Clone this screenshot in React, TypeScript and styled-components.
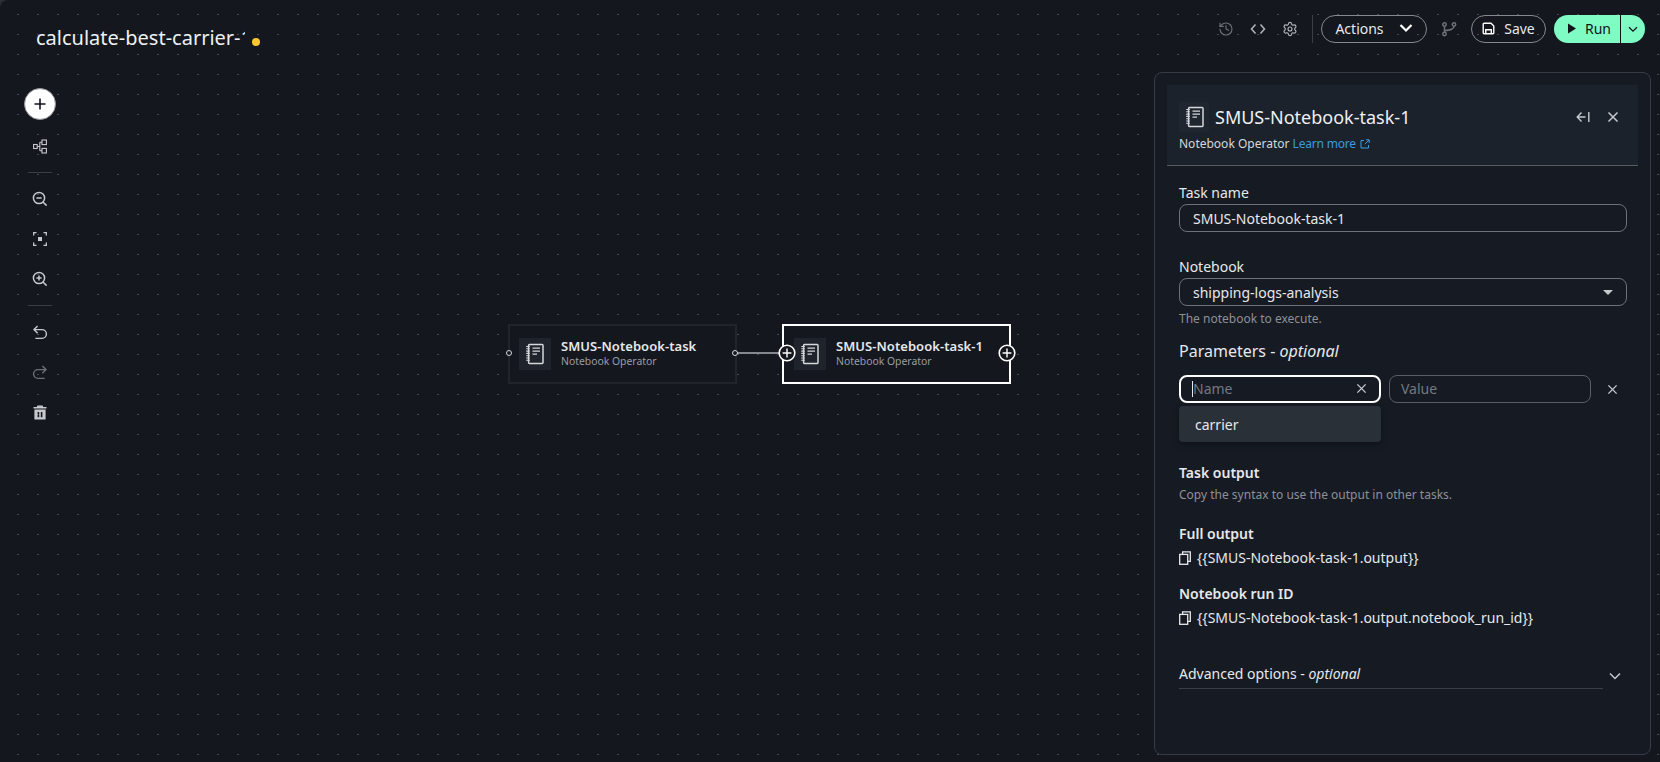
import styled, { createGlobalStyle } from "styled-components";
import { History, Settings } from "lucide-react";

const GlobalStyle = createGlobalStyle`
  html, body {
    margin: 0;
    padding: 0;
    background: #2b2e34;
  }
  * {
    box-sizing: border-box;
  }
`;

function NotebookIcon() {
  return (
    <svg width="20" height="22" viewBox="0 0 20 22" fill="none" stroke="currentColor">
      <rect x="3.6" y="1.6" width="14.4" height="18.8" rx="0.8" strokeWidth="1.5" />
      <path d="M7.5 5.2h7.5M7.5 8.2h7.5M7.5 11.2h4.5" strokeWidth="1.3" />
      <path d="M1.2 3.5h3.6M1.2 5.8h3.6M1.2 8.1h3.6M1.2 10.4h3.6M1.2 12.7h3.6M1.2 15h3.6M1.2 17.3h3.6" strokeWidth="1.1" />
    </svg>
  );
}

function CloseIcon({ size = 12 }: { size?: number }) {
  return (
    <svg width={size} height={size} viewBox="0 0 12 12" fill="none" stroke="currentColor" strokeWidth="1.5">
      <path d="M1.5 1.5l9 9M10.5 1.5l-9 9" />
    </svg>
  );
}

function CopyIcon() {
  return (
    <svg width="12" height="14" viewBox="0 0 12 14" fill="none" stroke="currentColor" strokeWidth="1.3">
      <rect x="0.7" y="3.4" width="8" height="9.9" />
      <path d="M3.6 3.2V0.8h7.7v9.6H8.8" />
    </svg>
  );
}

function AddCircle() {
  return (
    <svg width="18" height="18" viewBox="0 0 18 18" fill="#14171d" stroke="#fff">
      <circle cx="9" cy="9" r="7.8" strokeWidth="1.6" />
      <path d="M9 4.6v8.8M4.6 9h8.8" strokeWidth="1.4" />
    </svg>
  );
}

function TaskNode({ name, left, selected }: { name: string; left: number; selected?: boolean }) {
  return (
    <Node $left={left} $selected={selected}>
      <NodeIcon>
        <NotebookIcon />
      </NodeIcon>
      <NodeText>
        <NodeName>{name}</NodeName>
        <NodeType>Notebook Operator</NodeType>
      </NodeText>
      {selected ? (
        <>
          <AddHandle $side="left" $offset={-6}>
            <AddCircle />
          </AddHandle>
          <AddHandle $side="right" $offset={-7}>
            <AddCircle />
          </AddHandle>
        </>
      ) : (
        <>
          <RingHandle $side="left" $offset={-4} />
          <RingHandle $side="right" $offset={-3} />
        </>
      )}
    </Node>
  );
}

export default function App() {
  return (
    <Page>
      <GlobalStyle />
      <Header>
        <TitleWrap>
          <Title>calculate-best-carrier-1</Title>
          <UnsavedDot />
        </TitleWrap>
        <Actions>
          <HeaderIcon $dim>
            <History size={16} strokeWidth={1.7} />
          </HeaderIcon>
          <HeaderIcon>
            <svg width="16" height="16" viewBox="0 0 16 16" fill="none" stroke="currentColor" strokeWidth="1.5">
              <path d="M5.5 3.5L1.5 8l4 4.5M10.5 3.5l4 4.5-4 4.5" />
            </svg>
          </HeaderIcon>
          <HeaderIcon>
            <Settings size={16} strokeWidth={1.7} />
          </HeaderIcon>
          <HeaderDivider />
          <PillButton $width={106} $gap={15}>
            Actions
            <svg width="14" height="10" viewBox="0 0 14 10" fill="none" stroke="#fff" strokeWidth="2.2">
              <path d="M1.5 2l5.5 5.5L12.5 2" />
            </svg>
          </PillButton>
          <BranchIcon>
            <svg width="16" height="16" viewBox="0 0 16 16" fill="none" stroke="currentColor" strokeWidth="1.5">
              <circle cx="3.5" cy="3.5" r="1.7" />
              <circle cx="3.5" cy="13" r="1.7" />
              <circle cx="13" cy="3.5" r="1.7" />
              <path d="M3.5 5.2v6.1M13 5.2c0 3-3 3.6-9.5 4.6" />
            </svg>
          </BranchIcon>
          <PillButton $width={75} $gap={9}>
            <svg width="13" height="13" viewBox="0 0 14 14" fill="none" stroke="#fff" strokeWidth="1.5">
              <path d="M1.3 2.3a1 1 0 0 1 1-1h7.4l3 3v7.4a1 1 0 0 1-1 1H2.3a1 1 0 0 1-1-1z" />
              <path d="M4 12.5V8.3h6v4.2" />
            </svg>
            Save
          </PillButton>
          <RunGroup>
            <RunButton>
              <svg width="10" height="11" viewBox="0 0 10 11" fill="#0f141a">
                <path d="M1 .5l8 5-8 5z" />
              </svg>
              Run
            </RunButton>
            <RunCaret>
              <svg width="10" height="7" viewBox="0 0 10 7" fill="none" stroke="#0f141a" strokeWidth="1.3">
                <path d="M1 1.2l4 4 4-4" />
              </svg>
            </RunCaret>
          </RunGroup>
        </Actions>
      </Header>

      <Workspace>
        <Toolbar>
          <AddButton>
            <svg width="12" height="12" viewBox="0 0 12 12" stroke="#0f141a" strokeWidth="1.6">
              <path d="M6 .5v11M.5 6h11" />
            </svg>
          </AddButton>
          <ToolIcon $top={2}>
            <svg width="14" height="15" viewBox="0 0 14 15" fill="none" stroke="currentColor" strokeWidth="1.1">
              <rect x="0.6" y="5.5" width="3.6" height="4" />
              <rect x="9" y="1" width="4.4" height="4.6" />
              <rect x="9" y="9.4" width="4.4" height="4.6" />
              <path d="M4.2 7.5h2.6M6.8 3.3v8.4M6.8 3.3H9M6.8 11.7H9" />
            </svg>
          </ToolIcon>
          <ToolDivider />
          <ToolIcon>
            <svg width="16" height="16" viewBox="0 0 16 16" fill="none" stroke="currentColor" strokeWidth="1.5">
              <circle cx="7" cy="7" r="5.6" />
              <path d="M4.4 7h5.2M11 11l3.6 3.6" />
            </svg>
          </ToolIcon>
          <ToolIcon>
            <svg width="14" height="14" viewBox="0 0 14 14" fill="none" stroke="currentColor" strokeWidth="1.3">
              <path d="M.7 3.5V.7h2.8M10.5.7h2.8v2.8M13.3 10.5v2.8h-2.8M3.5 13.3H.7v-2.8" />
              <rect x="5" y="5" width="4" height="4" fill="currentColor" stroke="none" />
            </svg>
          </ToolIcon>
          <ToolIcon>
            <svg width="16" height="16" viewBox="0 0 16 16" fill="none" stroke="currentColor" strokeWidth="1.5">
              <circle cx="7" cy="7" r="5.6" />
              <path d="M4.4 7h5.2M7 4.4v5.2M11 11l3.6 3.6" />
            </svg>
          </ToolIcon>
          <ToolDivider />
          <ToolIcon>
            <svg width="14" height="15" viewBox="0 0 14 15" fill="none" stroke="currentColor" strokeWidth="1.4">
              <path d="M4.6 1L1 4.6l3.6 3.6M1 4.6h8a3.9 3.9 0 0 1 0 8.8H2.4" />
            </svg>
          </ToolIcon>
          <ToolIcon $dim>
            <svg width="14" height="15" viewBox="0 0 14 15" fill="none" stroke="currentColor" strokeWidth="1.4">
              <path d="M9.4 1L13 4.6 9.4 8.2M13 4.6H5a3.9 3.9 0 0 0 0 8.8h6.6" />
            </svg>
          </ToolIcon>
          <ToolIcon>
            <svg width="14" height="15" viewBox="0 0 14 15" fill="currentColor">
              <path d="M4.5.5h5l.8 1.5H13.5v1.6H.5V2h3.2z" />
              <path fillRule="evenodd" d="M1.4 4.6h11.2v10H1.4zM4.6 7v5.2h1.6V7zm3.2 0v5.2h1.6V7z" />
            </svg>
          </ToolIcon>
        </Toolbar>

        <Canvas>
          <Edge />
          <TaskNode name="SMUS-Notebook-task" left={428} />
          <TaskNode name="SMUS-Notebook-task-1" left={702} selected />
        </Canvas>

        <Panel>
          <PanelHeader>
            <PanelTitleRow>
              <PanelTileIcon>
                <NotebookIcon />
              </PanelTileIcon>
              <PanelTitle>SMUS-Notebook-task-1</PanelTitle>
              <PanelTools>
                <svg width="14" height="12" viewBox="0 0 14 12" fill="none" stroke="currentColor" strokeWidth="1.4">
                  <path d="M5.5 1.5L1.2 6l4.3 4.5M1.2 6h8.3M12.8 1v10" />
                </svg>
                <CloseIcon />
              </PanelTools>
            </PanelTitleRow>
            <PanelSubtitle>
              Notebook Operator <LearnMore>Learn more</LearnMore>
              <ExternalIcon viewBox="0 0 10 10" fill="none" stroke="#3d9bdc" strokeWidth="1">
                <path d="M4 1.5H1v7.5h7.5V6M6 .8h3.2V4M9 1L4.8 5.2" />
              </ExternalIcon>
            </PanelSubtitle>
          </PanelHeader>

          <Form>
            <FieldLabel>Task name</FieldLabel>
            <TextField>SMUS-Notebook-task-1</TextField>

            <FieldLabel $top={25}>Notebook</FieldLabel>
            <TextField>
              shipping-logs-analysis
              <SelectCaret />
            </TextField>
            <HelpText $top={5}>The notebook to execute.</HelpText>

            <SectionTitle>
              Parameters - <em>optional</em>
            </SectionTitle>
            <ParamRow>
              <NameField>
                <Caret />
                <Placeholder>Name</Placeholder>
                <CloseIcon size={11} />
              </NameField>
              <ValueField>
                <Placeholder>Value</Placeholder>
              </ValueField>
              <RemoveParam>
                <CloseIcon size={11} />
              </RemoveParam>
              <Suggestions>carrier</Suggestions>
            </ParamRow>

            <BoldLabel $top={60}>Task output</BoldLabel>
            <HelpText $top={4}>Copy the syntax to use the output in other tasks.</HelpText>

            <BoldLabel $top={21}>Full output</BoldLabel>
            <CopyRow>
              <CopyIcon />
              {"{{SMUS-Notebook-task-1.output}}"}
            </CopyRow>

            <BoldLabel $top={16}>Notebook run ID</BoldLabel>
            <CopyRow>
              <CopyIcon />
              {"{{SMUS-Notebook-task-1.output.notebook_run_id}}"}
            </CopyRow>

            <AdvancedRow>
              <AdvancedLabel>
                Advanced options - <em>optional</em>
              </AdvancedLabel>
              <AdvancedChevron width="12" height="8" viewBox="0 0 12 8" fill="none" stroke="#c6c9ce" strokeWidth="1.5">
                <path d="M1 1.5l5 5 5-5" />
              </AdvancedChevron>
            </AdvancedRow>
          </Form>
        </Panel>
      </Workspace>
    </Page>
  );
}

const Page = styled.div`
  position: relative;
  display: flex;
  flex-direction: column;
  width: 1660px;
  height: 762px;
  overflow: hidden;
  border-top-left-radius: 8px;
  background: #14171d;
  color: #e6e8eb;
  font-family: "Noto Sans", "Open Sans", sans-serif;

  /* dotted canvas grid */
  &::before {
    content: "";
    position: absolute;
    inset: 0;
    background-image: linear-gradient(to right, #45494f 2px, transparent 2px);
    background-size: 20px 20px;
    background-position: 17px 0;
    mask-image: linear-gradient(to bottom, transparent 14px, #000 14px, #000 15px, transparent 15px);
    mask-size: 20px 20px;
  }
`;

const Header = styled.header`
  position: relative;
  display: flex;
  align-items: flex-start;
  justify-content: space-between;
  height: 72px;
  padding: 15px 15px 0 36px;
`;

const TitleWrap = styled.div`
  display: flex;
  align-items: flex-end;
  margin-top: 9px;
`;

const Title = styled.h1`
  width: 209px;
  height: 28px;
  margin: 0;
  overflow: hidden;
  font-size: 20px;
  font-weight: 400;
  line-height: 28px;
  white-space: nowrap;
  color: #eef0f2;
`;

const UnsavedDot = styled.span`
  width: 8px;
  height: 8px;
  margin: 0 0 6px 7px;
  border-radius: 50%;
  background: #fbc531;
`;

const Actions = styled.div`
  display: flex;
  align-items: center;
  height: 28px;
`;

const HeaderIcon = styled.span<{ $dim?: boolean }>`
  display: flex;
  align-items: center;
  justify-content: center;
  width: 32px;
  height: 28px;
  color: ${({ $dim }) => ($dim ? "#6d7178" : "#b4b7bc")};
`;

const HeaderDivider = styled.span`
  width: 1px;
  height: 28px;
  margin: 0 8px 0 6px;
  background: #3a3e45;
`;

const BranchIcon = styled.span`
  display: flex;
  align-items: center;
  justify-content: center;
  width: 44px;
  height: 28px;
  color: #6d7178;
`;

const PillButton = styled.button<{ $width: number; $gap: number }>`
  display: flex;
  align-items: center;
  justify-content: center;
  gap: ${({ $gap }) => $gap}px;
  width: ${({ $width }) => $width}px;
  height: 28px;
  padding: 0 0 2px;
  border: 1px solid #85888e;
  border-radius: 14px;
  background: transparent;
  color: #e6e8eb;
  font-family: inherit;
  font-size: 14px;
`;

const RunGroup = styled.div`
  display: flex;
  width: 91px;
  height: 28px;
  margin-left: 8px;
  border-radius: 14px;
  overflow: hidden;
  background: #7ffcc4;
`;

const RunButton = styled.button`
  display: flex;
  flex: 1;
  align-items: center;
  gap: 8px;
  padding: 0 0 2px 13px;
  border: 0;
  background: transparent;
  color: #0f141a;
  font-family: inherit;
  font-size: 14px;
`;

const RunCaret = styled.span`
  display: flex;
  align-items: center;
  justify-content: center;
  width: 25px;
  border-left: 1px solid #0f141a;
`;

const Workspace = styled.main`
  position: relative;
  display: flex;
  flex: 1;
  min-height: 0;
`;

const Toolbar = styled.nav`
  display: flex;
  flex-direction: column;
  align-items: center;
  width: 80px;
  padding-top: 12px;
`;

const AddButton = styled.button`
  display: flex;
  align-items: center;
  justify-content: center;
  width: 32px;
  height: 32px;
  margin: 4px 0;
  padding: 0;
  border: 1px solid #8d9096;
  border-radius: 50%;
  background: #fff;
`;

const ToolIcon = styled.span<{ $dim?: boolean; $top?: number }>`
  display: flex;
  flex-shrink: 0;
  align-items: center;
  justify-content: center;
  width: 40px;
  height: 40px;
  margin-top: ${({ $top }) => $top ?? 0}px;
  color: ${({ $dim }) => ($dim ? "#6d7178" : "#c6c9ce")};
`;

const ToolDivider = styled.span`
  flex-shrink: 0;
  width: 24px;
  height: 1px;
  margin: 6px 0;
  background: #3a3e45;
`;

const Canvas = styled.section`
  position: relative;
  flex: 1;
`;

const Edge = styled.span`
  position: absolute;
  top: 280px;
  left: 656px;
  width: 50px;
  height: 2px;
  background: #85888e;
`;

const Node = styled.div<{ $left: number; $selected?: boolean }>`
  position: absolute;
  top: 252px;
  left: ${({ $left }) => $left}px;
  display: flex;
  align-items: center;
  gap: 10px;
  width: 229px;
  height: 60px;
  padding-left: ${({ $selected }) => ($selected ? 10 : 9)}px;
  border: 2px solid ${({ $selected }) => ($selected ? "#fff" : "#20252c")};
  background: #14171d;
`;

const NodeIcon = styled.span`
  display: flex;
  align-items: center;
  justify-content: center;
  width: 32px;
  height: 32px;
  background: #1f242c;
  color: #d5d7da;
`;

const NodeText = styled.div`
  margin-top: -2px;
`;

const NodeName = styled.div`
  font-size: 13px;
  font-weight: 600;
  line-height: 16px;
  letter-spacing: 0.05px;
  color: #e6e8eb;
`;

const NodeType = styled.div`
  font-size: 10.4px;
  line-height: 14px;
  color: #9a9da3;
`;

const RingHandle = styled.span<{ $side: "left" | "right"; $offset: number }>`
  position: absolute;
  top: 24px;
  ${({ $side, $offset }) => `${$side}: ${$offset}px;`}
  width: 6px;
  height: 6px;
  border: 1px solid #d5d7da;
  border-radius: 50%;
  background: #14171d;
`;

const AddHandle = styled.span<{ $side: "left" | "right"; $offset: number }>`
  position: absolute;
  top: 18px;
  ${({ $side, $offset }) => `${$side}: ${$offset}px;`}
  display: flex;
  width: 18px;
  height: 18px;
`;

const Panel = styled.aside`
  position: relative;
  flex-shrink: 0;
  width: 497px;
  height: 683px;
  margin-right: 9px;
  border: 1px solid #373b43;
  border-radius: 8px;
  background: #161b23;
`;

const PanelHeader = styled.div`
  height: 81px;
  margin: 12px 12px 0;
  padding: 0 12px;
  border-bottom: 1px solid #565a61;
  background: #1b222c;
`;

const PanelTitleRow = styled.div`
  display: flex;
  align-items: center;
  height: 40px;
  padding-top: 24px;
`;

const PanelTileIcon = styled.span`
  display: flex;
  flex-shrink: 0;
  align-items: center;
  justify-content: center;
  width: 30px;
  height: 30px;
  margin-right: 6px;
  padding-left: 1px;
  background: #1f2630;
  color: #d5d7da;
`;

const PanelTitle = styled.div`
  flex: 1;
  font-size: 18px;
  color: #eef0f2;
`;

const PanelTools = styled.div`
  display: flex;
  align-items: center;
  gap: 17px;
  padding-right: 7px;
  color: #c6c9ce;
`;

const PanelSubtitle = styled.div`
  display: flex;
  align-items: center;
  margin-top: 11px;
  font-size: 12px;
  line-height: 16px;
  white-space: pre;
  color: #d5d7da;
`;

const LearnMore = styled.a`
  letter-spacing: -0.2px;
  color: #3d9bdc;
`;

const ExternalIcon = styled.svg`
  width: 10px;
  height: 10px;
  margin-left: 4px;
`;

const Form = styled.div`
  padding: 17px 23px 0 24px;
`;

const FieldLabel = styled.div<{ $top?: number }>`
  margin: ${({ $top }) => $top ?? 0}px 0 1px;
  font-size: 14px;
  line-height: 20px;
  color: #e6e8eb;
`;

const TextField = styled.div`
  display: flex;
  align-items: center;
  justify-content: space-between;
  height: 28px;
  padding: 0 13px;
  border: 1px solid #6d7178;
  border-radius: 8px;
  font-size: 14px;
  color: #e6e8eb;
`;

const SelectCaret = styled.span`
  width: 0;
  height: 0;
  border-top: 5px solid #c6c9ce;
  border-right: 5px solid transparent;
  border-left: 5px solid transparent;
`;

const HelpText = styled.div<{ $top: number }>`
  margin-top: ${({ $top }) => $top}px;
  font-size: 12px;
  line-height: 16px;
  color: #8d9096;
`;

const SectionTitle = styled.div`
  margin-top: 13px;
  font-size: 16px;
  line-height: 22px;
  color: #e6e8eb;
`;

const ParamRow = styled.div`
  position: relative;
  display: flex;
  align-items: center;
  gap: 8px;
  height: 28px;
  margin-top: 13px;
`;

const NameField = styled.div`
  display: flex;
  align-items: center;
  justify-content: space-between;
  width: 202px;
  height: 28px;
  padding: 0 12px 1px 11px;
  border: 2px solid #fff;
  border-radius: 8px;
  color: #c6c9ce;
  font-size: 14px;
`;

const Caret = styled.span`
  width: 1px;
  height: 16px;
  background: #e6e8eb;
`;

const Placeholder = styled.span`
  flex: 1;
  font-size: 14px;
  color: #74787f;
`;

const ValueField = styled.div`
  display: flex;
  align-items: center;
  width: 202px;
  height: 28px;
  padding: 0 12px 1px 11px;
  border: 1px solid #5a5e65;
  border-radius: 8px;
`;

const RemoveParam = styled.span`
  display: flex;
  margin-left: 8px;
  color: #c6c9ce;
`;

const Suggestions = styled.div`
  position: absolute;
  top: 31px;
  left: 0;
  width: 202px;
  height: 36px;
  padding-left: 16px;
  border-radius: 4px;
  background: #2a3038;
  box-shadow: 0 2px 6px rgba(0, 0, 0, 0.4);
  font-size: 14px;
  line-height: 38px;
  color: #e6e8eb;
`;

const BoldLabel = styled.div<{ $top: number }>`
  margin-top: ${({ $top }) => $top}px;
  font-size: 14px;
  font-weight: 600;
  line-height: 20px;
  color: #e6e8eb;
`;

const CopyRow = styled.div`
  display: flex;
  align-items: center;
  gap: 6px;
  margin-top: 4px;
  font-size: 14px;
  line-height: 20px;
  color: #e6e8eb;
`;

const AdvancedRow = styled.div`
  display: flex;
  align-items: center;
  gap: 6px;
  margin-top: 36px;
`;

const AdvancedLabel = styled.div`
  width: 424px;
  padding-bottom: 4px;
  border-bottom: 1px solid #3a3e45;
  font-size: 14px;
  line-height: 20px;
  color: #e6e8eb;
`;

const AdvancedChevron = styled.svg`
  margin-bottom: 2px;
`;
